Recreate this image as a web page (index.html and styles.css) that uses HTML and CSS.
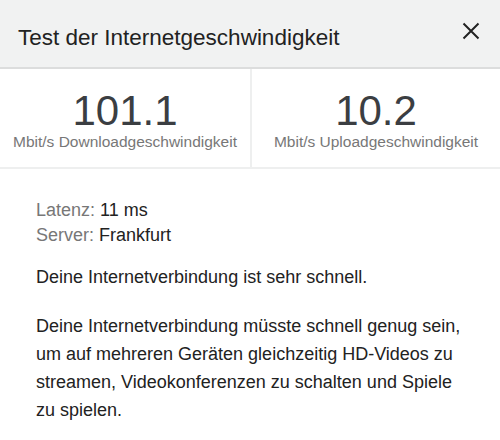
FILE: index.html
```html
<!DOCTYPE html>
<html lang="de">
<head>
<meta charset="utf-8">
<link rel="stylesheet" href="styles.css">
</head>
<body>
<div class="dialog">
  <header class="head">
    <h1 class="title">Test der Internetgeschwindigkeit</h1>
    <button class="close" aria-label="Schließen">
      <svg width="18" height="18" viewBox="0 0 18 18"><path d="M1.5 1.5 L16.5 16.5 M16.5 1.5 L1.5 16.5" stroke="#222" stroke-width="2" fill="none"/></svg>
    </button>
  </header>
  <section class="stats">
    <div class="stat">
      <div class="num">101.1</div>
      <div class="unit">Mbit/s Downloadgeschwindigkeit</div>
    </div>
    <div class="stat">
      <div class="num">10.2</div>
      <div class="unit">Mbit/s Uploadgeschwindigkeit</div>
    </div>
  </section>
  <section class="body">
    <div class="meta">
      <div><span class="lbl">Latenz:</span> 11 ms</div>
      <div><span class="lbl">Server:</span> Frankfurt</div>
    </div>
    <p class="txt">Deine Internetverbindung ist sehr schnell.</p>
    <p class="txt long">Deine Internetverbindung müsste schnell genug sein, um auf mehreren Geräten gleichzeitig HD-Videos zu streamen, Videokonferenzen zu schalten und Spiele zu spielen.</p>
  </section>
</div>
</body>
</html>
```
FILE: styles.css
```css
* { box-sizing: border-box; }
html, body { margin: 0; padding: 0; background: #fff; }
body { font-family: "Liberation Sans", Arial, sans-serif; color: #222; }
.dialog { width: 500px; height: 440px; overflow: hidden; }
.head {
  height: 69px;
  background: #f1f2f2;
  border-bottom: 2px solid #dcdddd;
  display: flex;
  align-items: flex-start;
  justify-content: space-between;
  padding: 25px 20px 0 18px;
}
.title { margin: 0; font-size: 22.5px; line-height: 26px; font-weight: normal; color: #222; }
.close { background: none; border: 0; padding: 0; display: flex; margin-top: -3px; }
.stats {
  display: grid;
  grid-template-columns: 1fr 1fr;
  border-bottom: 2px solid #eeefef;
  height: 100px;
}
.stat {
  display: flex;
  flex-direction: column;
  align-items: center;
  padding-top: 21px;
}
.stat + .stat { border-left: 2px solid #eeefef; }
.num { font-size: 42px; line-height: 42px; color: #3b3e42; }
.unit { font-size: 15.5px; color: #777; margin-top: 1px; }
.body { padding: 29px 32px 0 36px; font-size: 18px; }
.meta { line-height: 25px; }
.lbl { color: #777; }
.txt { margin: 15px 0 0; line-height: 28px; }
.long { margin-top: 21px; }
```
